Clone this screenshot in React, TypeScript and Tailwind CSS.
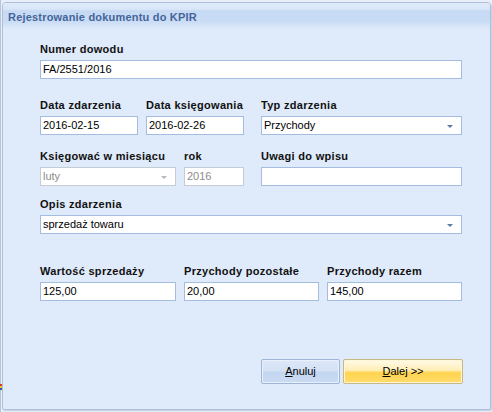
import React from "react";

const font = { fontFamily: '"Liberation Sans", Arial, sans-serif' };

const Label = ({ children, className = "" }: { children: React.ReactNode; className?: string }) => (
  <div className={`h-[13px] text-[11px] leading-[13px] font-bold tracking-[0.3px] text-[#111] whitespace-nowrap ${className}`}>
    {children}
  </div>
);

const Arrow = ({ disabled }: { disabled?: boolean }) => (
  <svg width="6" height="3" viewBox="0 0 6 3" className="absolute right-[8px] top-[8px]">
    <path d="M0 0h6L3 3z" fill={disabled ? "#b4b9c0" : "#5b7aa8"} />
  </svg>
);

const Field = ({
  value,
  width,
  disabled,
  select,
}: {
  value?: string;
  width: string;
  disabled?: boolean;
  select?: boolean;
}) => (
  <div
    className={`relative mt-[4px] h-[19px] ${width} bg-white border flex items-center pl-[2px] text-[11px] leading-[13px] ${
      disabled ? "border-[#c4ccd8] text-[#8c8c8c]" : "border-[#a3bce0] text-black"
    }`}
  >
    {value}
    {select && <Arrow disabled={disabled} />}
  </div>
);

const Group = ({ label, children, className = "" }: { label: string; children: React.ReactNode; className?: string }) => (
  <div className={`flex flex-col ${className}`}>
    <Label>{label}</Label>
    {children}
  </div>
);

export default function App() {
  return (
    <div className="w-[492px] h-[412px] bg-[#e9eff8] relative overflow-hidden" style={font}>
      <div className="absolute left-0 top-0 w-px h-full bg-[#b6c5da]" />
      <div className="absolute left-0 top-[384px] w-[2px] h-[2px] bg-[#d93a2a]" />
      <div className="absolute left-0 top-[386px] w-[2px] h-[2px] bg-[#f2c230]" />
      <div className="absolute left-0 top-[388px] w-[2px] h-[2px] bg-[#2c5db8]" />
      <div className="ml-[2px] mt-[2px] w-[489px] h-[408px] border border-[#aebfd7] rounded-t-[4px] rounded-b-[2px] bg-[#dfeafa] shadow-[1px_1px_1px_#c3d1e4] overflow-hidden">
        <div className="h-[26px] flex items-center pl-[5px] pt-[2px] bg-[linear-gradient(to_bottom,#e0eaf9_0%,#d9e6f8_24%,#c7daf4_30%,#c9dcf5_70%,#dfeafa_100%)]">
          <span className="text-[11px] font-bold tracking-[0.2px] text-[#45659a]">Rejestrowanie dokumentu do KPIR</span>
        </div>
        <div className="pl-[37px] pt-[14px]">
          <Group label="Numer dowodu">
            <Field value="FA/2551/2016" width="w-[422px]" />
          </Group>

          <div className="flex mt-[20px]">
            <Group label="Data zdarzenia">
              <Field value="2016-02-15" width="w-[98px]" />
            </Group>
            <Group label="Data księgowania" className="ml-[8px]">
              <Field value="2016-02-26" width="w-[98px]" />
            </Group>
            <Group label="Typ zdarzenia" className="ml-[17px]">
              <Field value="Przychody" width="w-[201px]" select />
            </Group>
          </div>

          <div className="flex mt-[15px]">
            <Group label="Księgować w miesiącu">
              <Field value="luty" width="w-[136px]" disabled select />
            </Group>
            <Group label="rok" className="ml-[8px]">
              <Field value="2016" width="w-[60px]" disabled />
            </Group>
            <Group label="Uwagi do wpisu" className="ml-[17px]">
              <Field width="w-[201px]" />
            </Group>
          </div>

          <div className="mt-[12px]">
            <Group label="Opis zdarzenia">
              <Field value="sprzedaż towaru" width="w-[422px]" select />
            </Group>
          </div>

          <div className="flex mt-[31px]">
            <Group label="Wartość sprzedaży">
              <Field value="125,00" width="w-[136px]" />
            </Group>
            <Group label="Przychody pozostałe" className="ml-[8px]">
              <Field value="20,00" width="w-[135px]" />
            </Group>
            <Group label="Przychody razem" className="ml-[8px]">
              <Field value="145,00" width="w-[135px]" />
            </Group>
          </div>

          <div className="flex mt-[58px] ml-[221px] gap-[3px]">
            <button className="w-[79px] h-[25px] rounded-[2px] border border-[#9fb6d8] bg-[linear-gradient(to_bottom,#dde8f8_0%,#d3e1f5_48%,#c3d6f0_52%,#cadcf3_100%)] shadow-[inset_0_0_0_1px_#e9f0fb] text-[11px] text-black">
              <span className="underline">A</span>nuluj
            </button>
            <button className="w-[120px] h-[25px] rounded-[2px] border border-[#c9b784] bg-[linear-gradient(to_bottom,#fffbea_0%,#ffeeb5_45%,#ffd44f_55%,#ffdb6a_100%)] shadow-[inset_0_0_0_1px_#fff6d8] text-[11px] text-black">
              <span className="underline">D</span>alej &gt;&gt;
            </button>
          </div>
        </div>
      </div>
    </div>
  );
}
